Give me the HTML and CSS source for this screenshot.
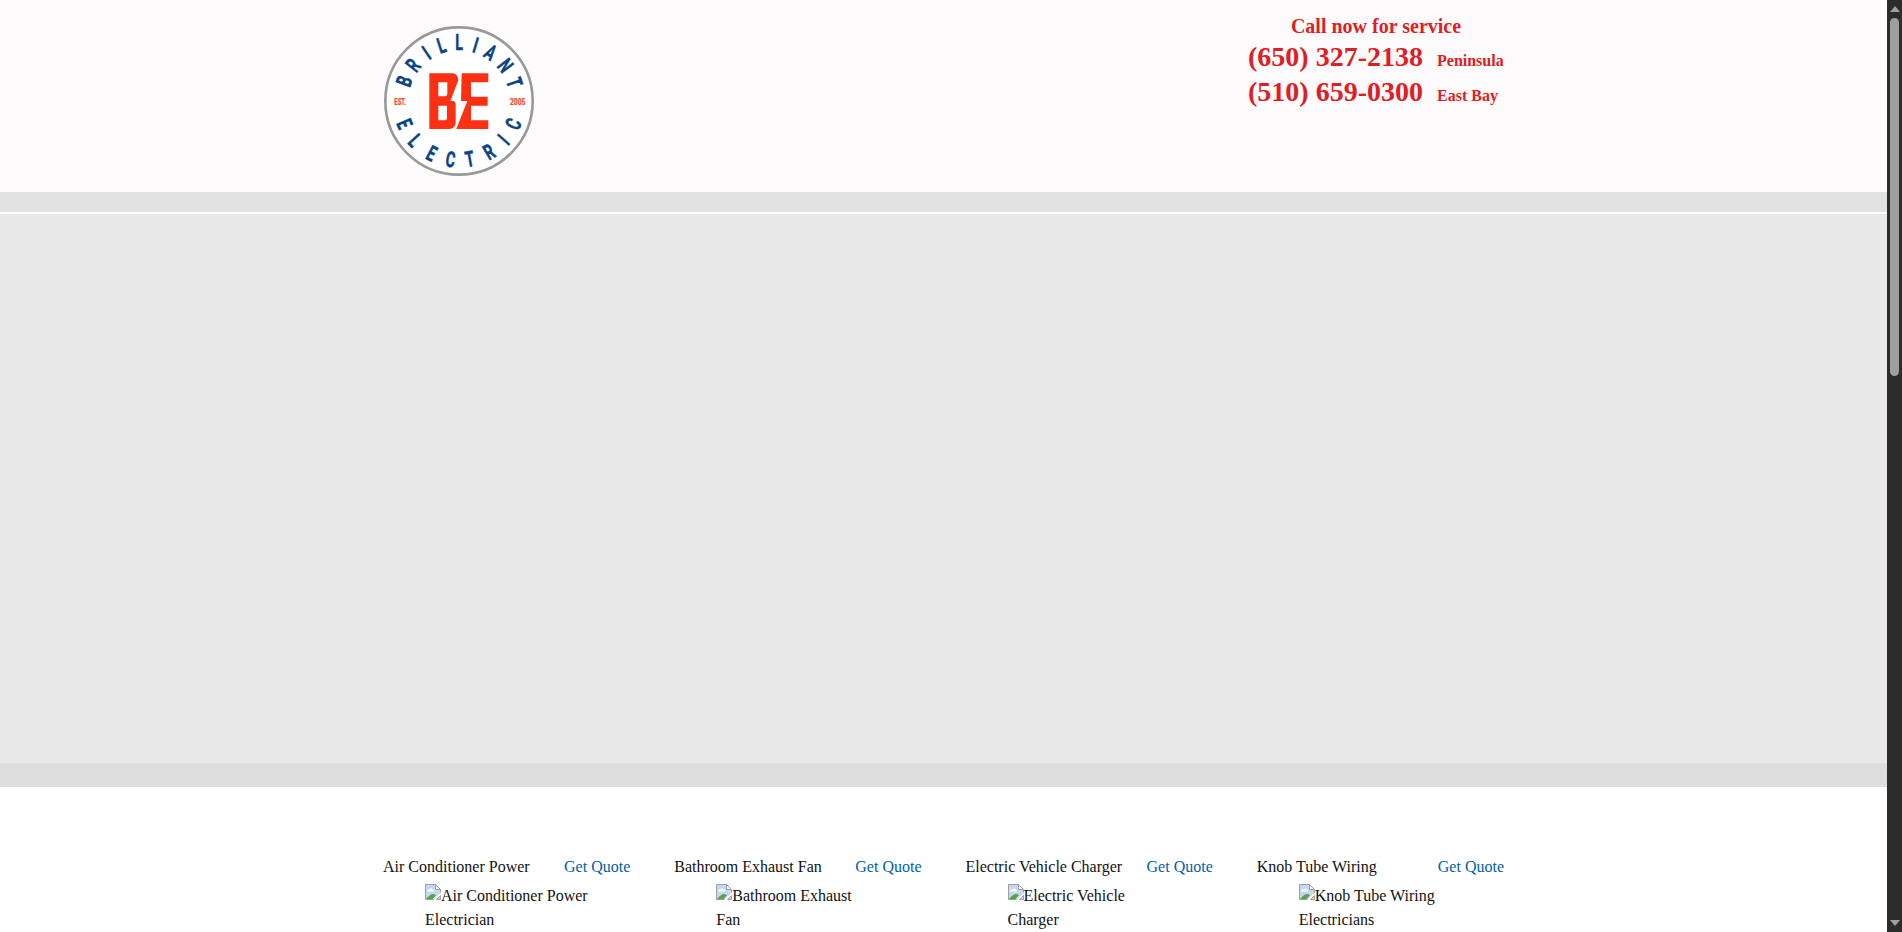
FILE: index.html
```html
<!DOCTYPE html>
<html lang="en">
<head>
<meta charset="utf-8">
<title>Brilliant Electric</title>
<link rel="stylesheet" href="styles.css">
</head>
<body>
<div class="page">
<header class="header"><div class="container header-inner">
<svg class="logo" viewBox="42 33 450 450" role="img" aria-label="Brilliant Electric">
<circle cx="267" cy="258" r="221" fill="#fff" stroke="#9b9898" stroke-width="8"/>
<path fill="#fc3113" fill-rule="evenodd" d="M178 175H249Q264 178 265 196L241 258H250Q257 260 257 270V325Q254 341 239 342H178ZM205 202V244H226Q232 242 232 236V202ZM205 272V316H226Q231 314 231 308V272ZM275 175H355V202H303V245H353V272H303V316H355V342H259L292 258H273Z"/>
<g class="ring">
<text transform="translate(267 258) rotate(-70) translate(0 -152) scale(.66 1)">B</text>
<text transform="translate(267 258) rotate(-52) translate(0 -152) scale(.66 1)">R</text>
<text transform="translate(267 258) rotate(-34) translate(0 -152) scale(.66 1)">I</text>
<text transform="translate(267 258) rotate(-17.5) translate(0 -152) scale(.66 1)">L</text>
<text transform="translate(267 258) rotate(0) translate(0 -152) scale(.66 1)">L</text>
<text transform="translate(267 258) rotate(16.5) translate(0 -152) scale(.66 1)">I</text>
<text transform="translate(267 258) rotate(33) translate(0 -152) scale(.66 1)">A</text>
<text transform="translate(267 258) rotate(52.5) translate(0 -152) scale(.66 1)">N</text>
<text transform="translate(267 258) rotate(71.5) translate(0 -152) scale(.66 1)">T</text>
<text transform="translate(267 258) rotate(67) translate(0 200) scale(.66 1)">E</text>
<text transform="translate(267 258) rotate(48) translate(0 200) scale(.66 1)">L</text>
<text transform="translate(267 258) rotate(27.7) translate(0 200) scale(.66 1)">E</text>
<text transform="translate(267 258) rotate(8.4) translate(0 200) scale(.66 1)">C</text>
<text transform="translate(267 258) rotate(-10.5) translate(0 200) scale(.66 1)">T</text>
<text transform="translate(267 258) rotate(-30.6) translate(0 200) scale(.66 1)">R</text>
<text transform="translate(267 258) rotate(-49) translate(0 200) scale(.66 1)">I</text>
<text transform="translate(267 258) rotate(-67) translate(0 200) scale(.66 1)">C</text>
</g>
<text class="small" x="73" y="269" textLength="35" lengthAdjust="spacingAndGlyphs">EST.</text>
<text class="small" x="420" y="269" textLength="46" lengthAdjust="spacingAndGlyphs">2005</text>
</svg>
<div class="phones">
<div class="call">Call now for service</div>
<div class="phone"><span class="number">(650) 327-2138</span><span class="area">Peninsula</span></div>
<div class="phone"><span class="number">(510) 659-0300</span><span class="area">East Bay</span></div>
</div>
</div></header>
<div class="nav-band"></div>
<div class="hero"></div>
<div class="hero-foot"></div>
<main class="container services">
<section><div class="title"><span>Air Conditioner Power</span><a class="quote">Get Quote</a></div><div class="alt"><svg class="broken" viewBox="0 0 16 16"><use href="#broken"/></svg>Air Conditioner Power<br>Electrician</div></section>
<section><div class="title"><span>Bathroom Exhaust Fan</span><a class="quote">Get Quote</a></div><div class="alt"><svg class="broken" viewBox="0 0 16 16"><use href="#broken"/></svg>Bathroom Exhaust<br>Fan</div></section>
<section><div class="title"><span>Electric Vehicle Charger</span><a class="quote">Get Quote</a></div><div class="alt"><svg class="broken" viewBox="0 0 16 16"><use href="#broken"/></svg>Electric Vehicle<br>Charger</div></section>
<section><div class="title"><span>Knob Tube Wiring</span><a class="quote">Get Quote</a></div><div class="alt"><svg class="broken" viewBox="0 0 16 16"><use href="#broken"/></svg>Knob Tube Wiring<br>Electricians</div></section>
</main>
</div>
<div class="scrollbar">
<svg class="arrow" viewBox="0 0 10 6"><path d="M5 0L10 6H0Z"/></svg>
<div class="thumb"></div>
<svg class="arrow down" viewBox="0 0 10 6"><path d="M0 0H10L5 6Z"/></svg>
</div>
<svg width="0" height="0" class="defs"><symbol id="broken" viewBox="0 0 16 16">
<path d="M.5 .5H10.5L15.5 5.5V9L8.500 15.500H.5Z" fill="#c5d7f5"/>
<path d="M2 7.500a2 2 0 0 1 2-2 2.500 2.500 0 0 1 4 0 1.500 1.500 0 0 1 1 2Z" fill="#fff"/>
<path d="M1 15Q3 12 6 10.500Q8 9.500 11 11L7.500 15Z" fill="#55a63f"/>
<path d="M8.500 15.500H.5V.5H10.500L15.500 5.500V8.500" fill="none" stroke="#a0a0a0"/>
<path d="M10.500 .5V5.500H15.500Z" fill="#fff" stroke="#a0a0a0"/>
<path d="M15.500 11.500V15.500H11.500Z" fill="#c5d7f5" stroke="#a0a0a0"/>
</symbol></svg>
</body>
</html>
```
FILE: styles.css
```css
* { box-sizing: border-box; }
body { margin: 0; height: 932px; overflow: hidden; display: flex; background: #fff; color: #111; font: 16px/24px "Liberation Serif", "Times New Roman", serif; }
.page { width: 1887px; height: 932px; overflow: hidden; }
.container { width: 1121px; margin: 0 auto; }
.header { height: 192px; background: #fcfafb; }
.header-inner { display: flex; justify-content: space-between; }
.logo { width: 150px; height: 150px; margin-top: 26px; margin-left: 1px; }
.ring text { font: 700 65px Roboto, sans-serif; fill: #0b4484; stroke: #0b4484; stroke-width: 1.5px; text-anchor: middle; }
.small { font: 700 28px Roboto, sans-serif; fill: #f5462e; stroke: #f5462e; stroke-width: .6px; }
.phones { width: 256px; padding-top: 10px; color: #dd1f26; font-weight: 700; }
.call { width: 256px; height: 29px; text-align: center; font-size: 20px; line-height: 32px; }
.phone { display: flex; align-items: baseline; height: 35px; line-height: 35px; }
.number { font-size: 28px; width: 189px; }
.nav-band { height: 22px; background: #e2e2e2; border-bottom: 2px solid #fff; }
.hero { height: 549px; background: #e8e8e8; }
.hero-foot { height: 24px; background: #dedede; }
.services { display: grid; grid-template-columns: repeat(4, 247.25px); column-gap: 44px; padding-top: 67px; }
.title { display: flex; justify-content: space-between; height: 30px; line-height: 26px; }
.quote { color: #0061a8; }
.alt { width: 164px; margin-left: 42px; }
.broken { width: 16px; height: 16px; vertical-align: 1px; }
.scrollbar { width: 15px; height: 932px; background: #2c2c2c; display: flex; flex-direction: column; align-items: center; padding: 6px 0; }
.arrow { width: 10px; height: 6px; fill: #a0a0a0; flex: none; }
.thumb { width: 9px; height: 358px; margin-top: 6px; border-radius: 5px; background: #9f9f9f; }
.down { margin-top: auto; }
.defs { position: absolute; }
```
